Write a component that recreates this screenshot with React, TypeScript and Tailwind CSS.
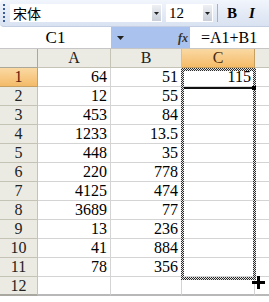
const data: [string, string, string][] = [
  ["64", "51", "115"],
  ["12", "55", ""],
  ["453", "84", ""],
  ["1233", "13.5", ""],
  ["448", "35", ""],
  ["220", "778", ""],
  ["4125", "474", ""],
  ["3689", "77", ""],
  ["13", "236", ""],
  ["41", "884", ""],
  ["78", "356", ""],
  ["", "", ""],
]

const serif = "[font-family:'Liberation_Serif',serif]"

const DropButton = () => (
  <div className="flex h-[16px] w-[9px] items-center justify-center bg-gradient-to-b from-[#eef0f4] to-[#c9ced8]">
    <svg width="5" height="3" viewBox="0 0 5 3">
      <path d="M0 0h5L2.5 3z" fill="#222" />
    </svg>
  </div>
)

export default function App() {
  return (
    <div className="relative h-[302px] w-[269px] overflow-hidden bg-white text-black">
      {/* toolbar */}
      <div className="flex h-[27px] items-center rounded-l-[4px] border-b border-[#c3cee2] bg-gradient-to-b from-[#f1f5fc] to-[#d9e2f1] pl-[3px]">
        <div className="flex h-[18px] w-[2px] flex-col justify-between">
          {Array.from({ length: 5 }).map((_, i) => (
            <div key={i} className="h-[2px] w-[2px] bg-[#3a5c9a]" />
          ))}
        </div>
        <div className="ml-[5px] flex h-[18px] w-[152px] items-center justify-between bg-white pl-[3px] pr-[1px]">
          <span className="[font-family:'Noto_Sans_CJK_SC',sans-serif] text-[14px] leading-none">宋体</span>
          <DropButton />
        </div>
        <div className="ml-[4px] flex h-[18px] w-[47px] items-center justify-between bg-white pl-[3px] pr-[1px]">
          <span className={`${serif} text-[15px] leading-none`}>12</span>
          <DropButton />
        </div>
        <div className="ml-[4px] h-[18px] w-px bg-[#9fb1cf]" />
        <span className={`ml-[9px] ${serif} text-[15px] font-bold leading-none`}>B</span>
        <span className={`ml-[12px] ${serif} text-[15px] font-bold italic leading-none`}>I</span>
      </div>

      {/* formula bar */}
      <div className="flex h-[22px] items-center border-b border-[#c6c6c6]">
        <div className={`flex h-full w-[111px] items-center justify-center ${serif} text-[17px]`}>C1</div>
        <div className="flex h-full w-[79px] items-center justify-between bg-[#a9c2ee] pl-[6px] pr-[2px]">
          <svg width="7" height="4" viewBox="0 0 7 4">
            <path d="M0 0h7L3.5 4z" fill="#222" />
          </svg>
          <span className={`${serif} text-[12px] font-bold italic leading-none text-[#333]`}>fx</span>
        </div>
        <div className={`pl-[11px] ${serif} text-[16px]`}>=A1+B1</div>
      </div>

      {/* sheet */}
      <div className={`grid grid-cols-[38px_73px_71px_73px_1fr] ${serif} text-[16px] leading-none`}>
        <div className="h-[19px] border-b border-r border-[#aca899] bg-[#ecebe3]" />
        {["A", "B"].map((c) => (
          <div
            key={c}
            className="flex h-[19px] items-center justify-center border-b border-r border-[#c5c3b5] bg-[#ecebe3] text-[#222]"
          >
            {c}
          </div>
        ))}
        <div className="flex h-[19px] items-center justify-center border-b border-r border-[#c5a060] bg-gradient-to-b from-[#fad9a2] to-[#f4bb68] text-[#4a2a10]">
          C
        </div>
        <div className="h-[19px] border-b border-[#c5c3b5] bg-[#ecebe3]" />

        {data.map((r, i) => {
          const last = i === data.length - 1
          return (
            <div key={i} className="contents">
              <div
                className={`flex h-[19px] items-center justify-center border-r ${
                  i === 0
                    ? "border-b border-[#c5a060] bg-gradient-to-b from-[#fad9a2] to-[#f4bb68] text-[#5a2010]"
                    : "border-b border-[#c5c3b5] bg-[#ecebe3] text-[#222]"
                } ${last ? "border-b-2 border-b-[#a8a8a0]" : ""}`}
              >
                {i + 1}
              </div>
              {r.map((v, j) => (
                <div
                  key={j}
                  className={`flex h-[19px] items-center justify-end border-r border-[#d4d4d4] pr-[3px] ${
                    last ? "border-b-2 border-b-[#b8b8b8]" : "border-b"
                  }`}
                >
                  {v}
                </div>
              ))}
              <div
                className={`h-[19px] border-[#d4d4d4] ${last ? "border-b-2 border-b-[#b8b8b8]" : "border-b"}`}
              />
            </div>
          )
        })}
      </div>

      {/* copy marquee C1:C11 */}
      <div className="absolute left-[181px] top-[68px] h-[212px] w-[75px] p-[3px] [background:repeating-conic-gradient(#2a2a2a_0_25%,#e4e4e4_0_50%)_0_0/2px_2px] [mask:linear-gradient(#000_0_0)_content-box_exclude,linear-gradient(#000_0_0)]" />
      {/* active cell bottom edge + fill handle */}
      <div className="absolute left-[184px] top-[87px] h-[2px] w-[69px] bg-[#111]" />
      <div className="absolute left-[252px] top-[86px] h-[4px] w-[4px] bg-black" />
      {/* cursor */}
      <svg className="absolute left-[252px] top-[276px]" width="13" height="13" viewBox="0 0 13 13">
        <path d="M5 0h3v5h5v3H8v5H5V8H0V5h5z" fill="#000" />
      </svg>
    </div>
  )
}
